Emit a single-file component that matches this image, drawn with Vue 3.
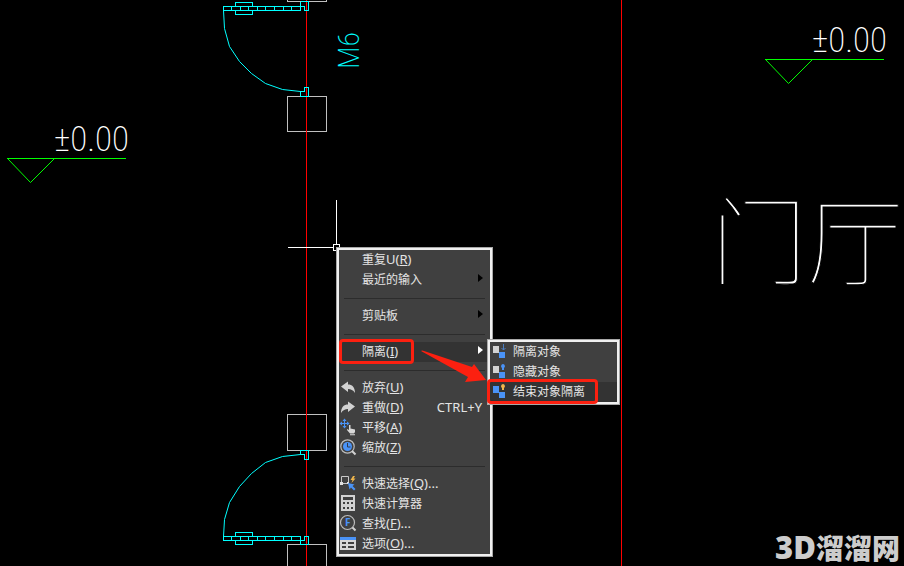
<script setup>
import { ref } from 'vue'

// open submenu and the row under the pointer
const openItem = ref('isolate')
const hovered = ref('end')

const menu = [
  [
    { id: 'repeat', label: '重复', latin: 'U', key: 'R' },
    { id: 'recent', label: '最近的输入', more: true }
  ],
  [{ id: 'clipboard', label: '剪贴板', more: true }],
  [{ id: 'isolate', label: '隔离', key: 'I', more: true }],
  [
    { id: 'undo', label: '放弃', key: 'U' },
    { id: 'redo', label: '重做', key: 'D', shortcut: 'CTRL+Y' },
    { id: 'pan', label: '平移', key: 'A' },
    { id: 'zoom', label: '缩放', key: 'Z' }
  ],
  [
    { id: 'select', label: '快速选择', key: 'Q', tail: '...' },
    { id: 'calc', label: '快速计算器' },
    { id: 'find', label: '查找', key: 'F', tail: '...' },
    { id: 'options', label: '选项', key: 'O', tail: '...' }
  ]
]

const submenu = [
  { id: 'only', label: '隔离对象' },
  { id: 'hide', label: '隐藏对象' },
  { id: 'end', label: '结束对象隔离' }
]

const panels = [231, 240, 248, 257, 265, 274, 283, 291]

function openSub(item) {
  if (item.more) openItem.value = item.id
}
</script>

<template>
  <main class="workspace">
    <svg class="drawing" fill="none" shape-rendering="crispEdges">
      <!-- columns -->
      <g class="column" transform="translate(.5 .5)">
        <rect x="287" y="-34" width="39" height="35" />
        <rect x="287" y="96" width="39" height="35" />
        <rect x="287" y="414" width="39" height="36" />
        <rect x="287" y="544" width="39" height="36" />
      </g>
      <!-- axis lines -->
      <rect class="axis" x="306" y="0" width="1" height="100%" />
      <rect class="axis" x="621" y="0" width="1" height="100%" />
      <!-- doors -->
      <g class="door" transform="translate(.5 .5)">
        <path d="M300 1V6H304V10H308V1M223 6H300V10H223ZM235 6V2H252V6M235 10V14H252V10" />
        <path v-for="x in panels" :key="x" :d="`M${x} 6V10M${x} 536V540`" />
        <path d="M300 1H308M300 10V6M300 96V91H304V87H308V96Z" />
        <path class="smooth" d="M223 10L224 28L229 46L239 61L251 73L265 83L282 89L300 91" />
        <path d="M300 450V454H304V459H308V450ZM223 536H300V540H223ZM235 536V532H252V536M235 540V544H252V540" />
        <path d="M300 544V540H304V536H308V544Z" />
        <path class="smooth" d="M300 454L282 456L265 462L251 473L239 486L229 502L224 519L223 536" />
      </g>
      <text class="cad door-name" transform="translate(359 69) rotate(-90)">M6</text>
      <!-- elevation marks -->
      <g class="level" transform="translate(.5 .5)">
        <path d="M6 158H125" />
        <path class="smooth" d="M7 158L30 182L54 158" />
        <path d="M764 59H883" />
        <path class="smooth" d="M765 59L788 83L812 59" />
      </g>
      <text class="cad" x="54" y="151">±0.00</text>
      <text class="cad" x="812" y="52">±0.00</text>
      <text class="room" x="711" y="277">门厅</text>
      <!-- crosshair -->
      <g class="cross" transform="translate(.5 .5)">
        <path d="M336 199V244M287 247H333" />
        <rect x="333" y="244" width="6" height="6" />
      </g>
    </svg>

    <nav class="menu main-menu">
      <ul v-for="(group, i) in menu" :key="i">
        <li v-for="item in group" :key="item.id" :class="{ open: openItem === item.id }">
          <button type="button" @mouseenter="openSub(item)">
            <svg class="icon" viewBox="0 0 16 16" fill="none">
              <path v-if="item.id === 'undo'" fill="#d2d2d2" d="M1 6.5L8 1.500V4.500C12 4.500 15 7 15 13C13 10 11 9 8 9V12Z" />
              <path v-else-if="item.id === 'redo'" fill="#d2d2d2" d="M15 6.5L8 1.500V4.500C4 4.500 1 7 1 13C3 10 5 9 8 9V12Z" />
              <g v-else-if="item.id === 'pan'">
                <path stroke="#4a93f7" d="M4.500 0V8M.500 3.500H8.500" />
                <path fill="#4a93f7" d="M4.500-1.500L6.500 1H2.500ZM4.500 8.500L6.500 6H2.500ZM-.500 3.500L2 1.500V5.500ZM9.500 3.500L7 1.500V5.500Z" />
                <path fill="#d8d8d8" d="M9 5H10.500V8.500L15 9.500V12L14 13.500H10L7 10V9L9 10ZM10 14.200H15V15.200H10Z" />
              </g>
              <g v-else-if="item.id === 'zoom'">
                <circle cx="7.500" cy="6.500" r="6.700" stroke="#bdbdbd" stroke-width="1.200" />
                <path stroke="#d2d2d2" stroke-width="2" d="M12 11L15.500 14.500" />
                <circle cx="7.500" cy="6.500" r="4.500" fill="#4a93f7" />
                <path stroke="#303b4b" d="M7.500 3V7H10.500" />
              </g>
              <g v-else-if="item.id === 'select'">
                <path stroke="#c8c8c8" d="M1.500 6V.500H8.500V7.500H2" />
                <path fill="#e0e0e0" d="M0 6H3V9H0ZM7 6H9V8H7Z" />
                <path fill="#f0b64c" d="M13 0L10.500 4H12.500L11.500 7L15.500 2.500H13.500L15 0Z" />
                <path fill="#4a93f7" d="M8 7L14.500 8.500L12.500 10L15.500 13L14 14.500L11 11.500L9.500 13.500Z" />
              </g>
              <g v-else-if="item.id === 'calc'">
                <path fill="#d2d2d2" d="M1-1H15V15H1Z" />
                <path fill="#404040" d="M3 1H13V4H3ZM3 6H5V8H3ZM7 6H9V8H7ZM11 6H13V8H11ZM3 11H5V13H3ZM7 11H9V13H7ZM11 11H13V13H11Z" />
              </g>
              <g v-else-if="item.id === 'find'">
                <circle cx="7.500" cy="6.500" r="7" stroke="#bdbdbd" stroke-width="1.200" />
                <path stroke="#d2d2d2" stroke-width="2" d="M12.500 11.500L15.500 14.500" />
                <text class="icon-letter" x="5" y="10">F</text>
              </g>
              <g v-else-if="item.id === 'options'">
                <path fill="#d8d8d8" d="M0 1H16V14H0Z" />
                <path fill="#4a93f7" d="M0 1H16V4H0Z" />
                <path fill="#404040" d="M2 6H6V8H2ZM8 6H14V8H8ZM2 10H6V12H2ZM8 10H14V12H8Z" />
              </g>
            </svg>
            <span class="label">{{ item.label }}<span v-if="item.latin || item.key" class="latin">{{ item.latin }}(<u>{{ item.key }}</u>){{ item.tail }}</span></span>
            <span v-if="item.shortcut" class="latin shortcut">{{ item.shortcut }}</span>
            <span v-if="item.more" class="more"></span>
          </button>

          <template v-if="item.id === 'isolate' && openItem === 'isolate'">
            <div class="mark main-mark"></div>
            <svg class="pointer" viewBox="0 0 66 32">
              <path d="M0 0Q1-1 3 0L51 16L53 13L65 29L44 31L47 26Z" />
            </svg>
            <div class="menu sub-menu">
              <ul>
                <li v-for="sub in submenu" :key="sub.id" :class="{ open: hovered === sub.id }">
                  <button type="button" @mouseenter="hovered = sub.id">
                    <svg class="icon" viewBox="0 0 16 16" fill="none">
                      <path :fill="sub.id === 'end' ? '#4a93f7' : '#d2d2d2'" d="M1 2H7V9H1Z" />
                      <path fill="#4a93f7" d="M7 8H13V14H7Z" />
                      <path v-if="sub.id === 'only'" stroke="#4a7fc4" d="M11.500 0V6M9.500 4L11.500 6L13.500 4" />
                      <path v-else :fill="sub.id === 'end' ? '#f0b64c' : '#4a93f7'" d="M11 0A2.200 2.200 0 0 1 12 4V6H10V4A2.200 2.200 0 0 1 11 0Z" />
                    </svg>
                    <span class="label">{{ sub.label }}</span>
                  </button>
                  <div v-if="sub.id === 'end'" class="mark sub-mark"></div>
                </li>
              </ul>
            </div>
          </template>
        </li>
      </ul>
    </nav>

    <p class="brand"><span>3D</span>溜溜网</p>
  </main>
</template>

<style>
body {
  background: #000;
}
</style>

<style scoped>
.workspace {
  position: relative;
  height: 100vh;
  overflow: hidden;
  background: #000;
  font-family: "Noto Sans", "Noto Sans CJK SC", sans-serif;
}
.drawing {
  position: absolute;
  inset: 0;
  width: 100%;
  height: 100%;
}
.smooth {
  shape-rendering: auto;
}
.column {
  stroke: #c0c0c0;
}
.axis {
  fill: #f00;
}
.door {
  stroke: #0ff;
}
.level {
  stroke: #0f0;
}
.cross {
  stroke: #fff;
}
.cad {
  font-family: "Roboto Condensed", "Liberation Sans Narrow", Roboto, sans-serif;
  font-size: 35px;
  font-weight: 200;
  fill: #fff;
}
.door-name {
  font-size: 30px;
  fill: #0ff;
}
.room {
  font-family: "Noto Sans CJK SC", sans-serif;
  font-size: 96px;
  font-weight: 100;
  fill: #fff;
  stroke: #000;
  stroke-width: 1px;
}

.menu {
  position: absolute;
  box-sizing: border-box;
  border: 1px solid #a8a8a8;
  background: #404040;
  box-shadow: inset 0 0 0 2px #f0f0f0;
  padding: 2px;
}
.main-menu {
  left: 336px;
  top: 247px;
  width: 157px;
}
.sub-menu {
  left: 148px;
  top: -3px;
  width: 133px;
}
ul {
  list-style: none;
  margin: 0;
  padding: 0;
}
ul + ul::before {
  content: "";
  display: block;
  height: 1px;
  margin: 8px 5px 7px;
  background: #2c2c2c;
}
li {
  position: relative;
}
li.open > button {
  background: #333;
}
button {
  display: flex;
  align-items: center;
  width: 100%;
  height: 20px;
  padding: 0 8px 0 1px;
  border: none;
  background: none;
  color: #e4e4e4;
  font-family: inherit;
  font-size: 12px;
  line-height: 20px;
  text-align: left;
  white-space: nowrap;
}
.sub-menu button {
  padding-left: 2px;
}
.icon {
  flex: none;
  width: 16px;
  height: 16px;
  margin-right: 6px;
  overflow: visible;
}
.sub-menu .icon {
  margin-right: 5px;
}
.icon-letter {
  font-size: 10px;
  font-weight: bold;
  fill: #4a93f7;
}
.label {
  flex: 1;
}
.latin {
  font-size: 13px;
  line-height: 12px;
}
.shortcut {
  margin-bottom: 2px;
}
.more {
  margin-bottom: 4px;
  margin-right: -1px;
  border: 4px solid transparent;
  border-left: 5px solid #000;
  border-right: none;
}
.open .more {
  border-left-color: #fff;
}

/* red callouts */
.mark {
  position: absolute;
  z-index: 1;
  box-sizing: border-box;
  height: 25px;
  border: 3px solid #fc2010;
  border-radius: 4px;
  pointer-events: none;
}
.main-mark {
  left: 0;
  top: -3px;
  width: 75px;
}
.sub-mark {
  left: -3px;
  top: -3px;
  width: 111px;
}
.pointer {
  position: absolute;
  left: 82px;
  top: 9px;
  width: 66px;
  height: 32px;
  overflow: visible;
  fill: #fc2010;
  pointer-events: none;
  z-index: 1;
}

.brand {
  position: absolute;
  right: 4px;
  bottom: 2px;
  margin: 0;
  color: #ccc;
  font-size: 28px;
  font-weight: 900;
  line-height: 32px;
}
.brand span {
  font-size: 31px;
}
</style>
